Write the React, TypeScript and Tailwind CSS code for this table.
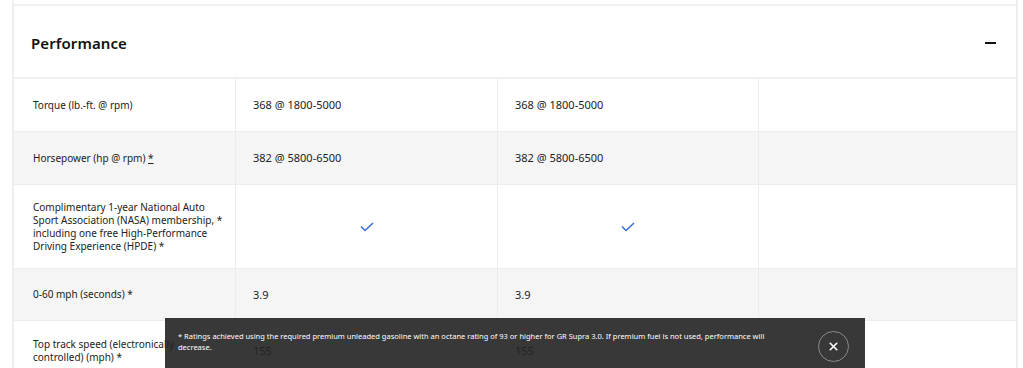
import { X } from 'lucide-react'

type Row = { label: React.ReactNode; values: (string | 'check')[]; gray?: boolean; h: string }

const rows: Row[] = [
  { label: 'Torque (lb.-ft. @ rpm)', values: ['368 @ 1800-5000', '368 @ 1800-5000', ''], h: 'h-[53px]' },
  {
    label: (
      <>
        Horsepower (hp @ rpm) <span className="underline">*</span>
      </>
    ),
    values: ['382 @ 5800-6500', '382 @ 5800-6500', ''],
    gray: true,
    h: 'h-[53px]',
  },
  {
    label: 'Complimentary 1-year National Auto Sport Association (NASA) membership, * including one free High-Performance Driving Experience (HPDE) *',
    values: ['check', 'check', ''],
    h: 'h-[84px]',
  },
  { label: '0-60 mph (seconds) *', values: ['3.9', '3.9', ''], gray: true, h: 'h-[52px]' },
  { label: 'Top track speed (electronically controlled) (mph) *', values: ['155', '155', ''], h: 'h-[60px]' },
]

function Check() {
  return (
    <svg width="14" height="10" viewBox="0 0 14 10" fill="none">
      <path d="M1 4.5 L5 8.5 L13 1" stroke="#3a6fd8" strokeWidth="1.6" />
    </svg>
  )
}

export default function App() {
  return (
    <div className="relative h-[368px] w-[1023px] overflow-hidden bg-white font-['Noto_Sans',sans-serif] text-[#222]">
      <div className="ml-[12px] w-[1006px] border-x-2 border-[#eeeeee]">
        {/* top strip */}
        <div className="h-[6px] border-b-2 border-[#f0f0f0]" />

        {/* Section header */}
        <div className="flex h-[73px] items-center justify-between border-b-2 border-[#f0f0f0] pl-[17px] pr-[20px] pt-[3px]">
          <h2 className="text-[15px] font-semibold tracking-[0.1px] text-[#111]">Performance</h2>
          <div className="h-[2px] w-[11px] bg-[#111]" />
        </div>

        {/* Spec rows */}
        {rows.map((row, i) => (
          <div
            key={i}
            className={`grid grid-cols-[222px_262px_261px_1fr] border-b border-[#ececec] ${row.h} ${row.gray ? 'bg-[#f5f5f5]' : 'bg-white'}`}
          >
            <div className="flex items-center border-r border-[#ececec] pl-[19px] pr-[10px] text-[10px] leading-[13px] text-[#222]">
              <span>{row.label}</span>
            </div>
            {row.values.map((v, j) => (
              <div
                key={j}
                className={`flex items-center pt-[1px] text-[11px] text-[#222] ${j < 2 ? 'border-r border-[#ececec]' : ''} ${v === 'check' ? 'justify-center' : 'pl-[17px]'}`}
              >
                {v === 'check' ? <Check /> : v}
              </div>
            ))}
          </div>
        ))}
      </div>

      {/* Disclaimer toast */}
      <div className="absolute left-[165px] top-[318px] flex h-[60px] w-[700px] items-start justify-between bg-[rgba(34,34,34,0.9)] pl-[13px] pr-[16px] pt-[13px]">
        <p className="w-[620px] text-[7.5px] leading-[11px] text-white">
          * Ratings achieved using the required premium unleaded gasoline with an octane rating of 93 or higher for GR Supra 3.0. If premium fuel is not used, performance will decrease.
        </p>
        <button className="flex h-[31px] w-[31px] items-center justify-center rounded-full border-[1.5px] border-[#8a8a8a]">
          <X size={13} strokeWidth={3} color="#ffffff" />
        </button>
      </div>
    </div>
  )
}
